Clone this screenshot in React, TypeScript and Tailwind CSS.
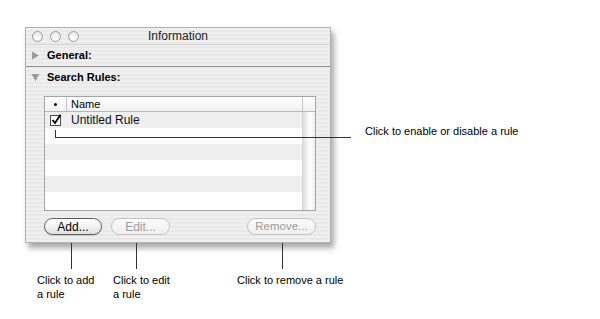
import React from "react";

const stripe =
  "bg-[repeating-linear-gradient(180deg,#efefef_0px,#efefef_2px,#e9e9e9_2px,#e9e9e9_4px)]";

function Light() {
  return (
    <div className="w-[11px] h-[11px] rounded-full border border-[#9c9c9c] bg-[radial-gradient(circle_at_50%_70%,#ffffff_0%,#e6e6e6_85%)]" />
  );
}

function Row({ grey, children }: { grey: boolean; children?: React.ReactNode }) {
  return (
    <div className={`h-[16px] flex items-center ${grey ? "bg-[#efefef]" : "bg-white"}`}>
      {children}
    </div>
  );
}

export default function App() {
  return (
    <div
      className="relative w-[600px] h-[319px] bg-white overflow-hidden text-black"
      style={{ fontFamily: '"Liberation Sans", Arial, sans-serif' }}
    >
      <div className="pt-[27px] pl-[25px]">
        <div
          className={`w-[306px] h-[216px] border border-[#b3b3b3] shadow-[3px_5px_6px_rgba(0,0,0,0.35)] ${stripe} flex flex-col`}
        >
          {/* title bar */}
          <div className="relative h-[17px] flex items-center border-b border-[#d4d4d4]">
            <div className="flex gap-[7px] pl-[6px]">
              <Light />
              <Light />
              <Light />
            </div>
            <div className="absolute inset-0 flex items-center justify-center text-[12px] leading-none text-[#222]">
              Information
            </div>
          </div>
          {/* General */}
          <div className="h-[22px] flex items-center border-b border-[#8e8e8e]">
            <svg width="9" height="9" viewBox="0 0 9 9" className="ml-[5px]">
              <polygon points="1,0.5 8,4.5 1,8.5" fill="#9a9a9a" />
            </svg>
            <span className="ml-[7px] text-[11px] font-bold leading-none">General:</span>
          </div>
          {/* Search Rules */}
          <div className="h-[20px] flex items-center">
            <svg width="9" height="9" viewBox="0 0 9 9" className="ml-[5px]">
              <polygon points="0.5,1 8.5,1 4.5,8" fill="#9a9a9a" />
            </svg>
            <span className="ml-[7px] text-[11px] font-bold leading-none">Search Rules:</span>
          </div>
          {/* table */}
          <div className="ml-[18px] mt-[9px] w-[272px] h-[115px] border border-[#a5a5a5] bg-white flex flex-col">
            <div className="h-[15px] flex border-b border-[#b8b8b8] bg-[linear-gradient(180deg,#ffffff,#f1f1f1)]">
              <div className="w-[22px] border-r border-[#c4c4c4] flex items-center justify-center">
                <div className="w-[3px] h-[3px] rounded-full bg-black" />
              </div>
              <div className="flex-1 flex items-center pl-[4px] text-[11px] leading-none border-r border-[#c4c4c4]">
                Name
              </div>
              <div className="w-[12px]" />
            </div>
            <div className="flex-1 flex overflow-hidden">
              <div className="flex-1 flex flex-col border-r border-[#d6d6d6]">
                <Row grey>
                  <div className="w-[22px] flex justify-center">
                    <svg width="12" height="12" viewBox="0 0 12 12">
                      <rect x="0.5" y="1.5" width="10" height="10" fill="#fff" stroke="#4a4a4a" />
                      <path d="M2.5 6 L5 9 L10.5 0.8" fill="none" stroke="#000" strokeWidth="1.8" />
                    </svg>
                  </div>
                  <span className="pl-[4px] text-[12px] leading-none text-[#111]">Untitled Rule</span>
                </Row>
                <Row grey={false} />
                <Row grey />
                <Row grey={false} />
                <Row grey />
                <div className="flex-1 bg-white" />
              </div>
              <div className="w-[12px] bg-[linear-gradient(90deg,#dcdcdc,#f7f7f7_40%,#ffffff_70%,#ececec)]" />
            </div>
          </div>
          {/* buttons */}
          <div className="ml-[18px] mt-[7px] w-[272px] flex items-center">
            <div className="w-[58px] h-[17px] rounded-full border border-[#5e5e5e] bg-[linear-gradient(180deg,#ffffff,#f2f2f2_50%,#dedede)] flex items-center justify-center text-[12px] leading-none shadow-[0_1px_1px_rgba(0,0,0,0.15)]">
              Add...
            </div>
            <div className="ml-[9px] w-[59px] h-[17px] rounded-full border border-[#c2c2c2] bg-[linear-gradient(180deg,#fbfbfb,#f0f0f0)] flex items-center justify-center text-[12px] leading-none text-[#9c9c9c]">
              Edit...
            </div>
            <div className="ml-auto w-[69px] h-[17px] rounded-full border border-[#c2c2c2] bg-[linear-gradient(180deg,#fbfbfb,#f0f0f0)] flex items-center justify-center text-[11.5px] leading-none text-[#9c9c9c]">
              Remove...
            </div>
          </div>
        </div>
      </div>

      {/* callouts */}
      <div className="absolute left-[55px] top-[130px] w-px h-[8px] bg-[#333]" />
      <div className="absolute left-[55px] top-[137px] w-[296px] h-px bg-[#333]" />
      <div className="absolute left-[365px] top-[125px] text-[11px] leading-[13px] whitespace-nowrap">
        Click to enable or disable a rule
      </div>

      <div className="absolute left-[71px] top-[243px] w-px h-[26px] bg-[#333]" />
      <div className="absolute left-[136px] top-[243px] w-px h-[26px] bg-[#333]" />
      <div className="absolute left-[282px] top-[243px] w-px h-[26px] bg-[#333]" />

      <div className="absolute left-[37px] top-[274px] text-[11px] leading-[13.5px] whitespace-nowrap">
        Click to add
        <br />a rule
      </div>
      <div className="absolute left-[113px] top-[274px] text-[11px] leading-[13.5px] whitespace-nowrap">
        Click to edit
        <br />a rule
      </div>
      <div className="absolute left-[237px] top-[274px] text-[11px] leading-[13.5px] whitespace-nowrap">
        Click to remove a rule
      </div>
    </div>
  );
}
